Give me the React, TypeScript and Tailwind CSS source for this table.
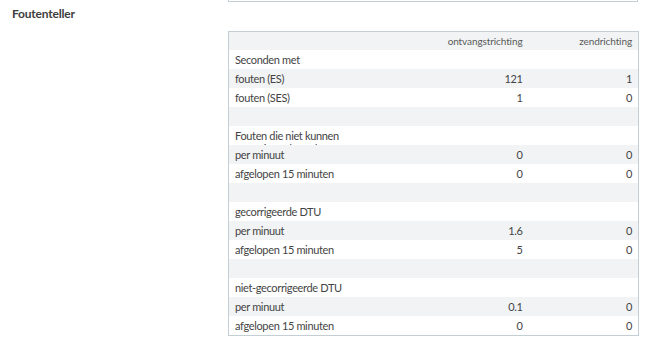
import React from "react";

type Row = { label: string; rx?: string; tx?: string; shade: boolean };

const rows: Row[] = [
  { label: "Seconden met", shade: false },
  { label: "fouten (ES)", rx: "121", tx: "1", shade: true },
  { label: "fouten (SES)", rx: "1", tx: "0", shade: false },
  { label: "", shade: true },
  { label: "Fouten die niet kunnen gecorrigeerd worden", shade: false },
  { label: "per minuut", rx: "0", tx: "0", shade: true },
  { label: "afgelopen 15 minuten", rx: "0", tx: "0", shade: false },
  { label: "", shade: true },
  { label: "gecorrigeerde DTU", shade: false },
  { label: "per minuut", rx: "1.6", tx: "0", shade: true },
  { label: "afgelopen 15 minuten", rx: "5", tx: "0", shade: false },
  { label: "", shade: true },
  { label: "niet-gecorrigeerde DTU", shade: false },
  { label: "per minuut", rx: "0.1", tx: "0", shade: true },
  { label: "afgelopen 15 minuten", rx: "0", tx: "0", shade: false },
];

export default function App() {
  return (
    <div className="w-[663px] h-[341px] bg-white flex font-['Lato','Liberation_Sans',sans-serif] text-[#444]">
      <div className="w-[228px] shrink-0 pl-[12px] pt-[6px]">
        <h2 className="text-[12px] font-bold leading-[16px] tracking-[-0.2px] text-[#3d3d3d]">Foutenteller</h2>
      </div>
      <div className="w-[410px] shrink-0">
        <div className="h-[2px] border-x border-b border-[#c3ced5]" />
        <table className="mt-[29px] w-[410px] table-fixed border-collapse border border-[#c3ced5] text-[11px] tracking-[-0.35px]">
          <colgroup>
            <col className="w-[163px]" />
            <col className="w-[137px]" />
            <col className="w-[110px]" />
          </colgroup>
          <thead>
            <tr className="bg-[#f1f3f4] h-[18px]">
              <th className="p-0" />
              <th className="p-0 pr-[6px] text-right font-normal text-[10px] tracking-[-0.1px] text-[#5a5a5a] leading-[18px]">
                ontvangstrichting
              </th>
              <th className="p-0 pr-[6px] text-right font-normal text-[10px] tracking-[-0.1px] text-[#5a5a5a] leading-[18px]">
                zendrichting
              </th>
            </tr>
          </thead>
          <tbody>
            {rows.map((r, i) => (
              <tr key={i} className={r.shade ? "bg-[#f1f3f4]" : "bg-white"}>
                <td className="p-0 pl-[6px] align-top">
                  <div className="h-[19px] overflow-hidden pt-[3px] leading-[13px]">{r.label}</div>
                </td>
                <td className="p-0 pr-[6px] text-right align-top">
                  <div className="h-[19px] pt-[3px] leading-[13px]">{r.rx ?? ""}</div>
                </td>
                <td className="p-0 pr-[6px] text-right align-top">
                  <div className="h-[19px] pt-[3px] leading-[13px]">{r.tx ?? ""}</div>
                </td>
              </tr>
            ))}
          </tbody>
        </table>
      </div>
    </div>
  );
}
